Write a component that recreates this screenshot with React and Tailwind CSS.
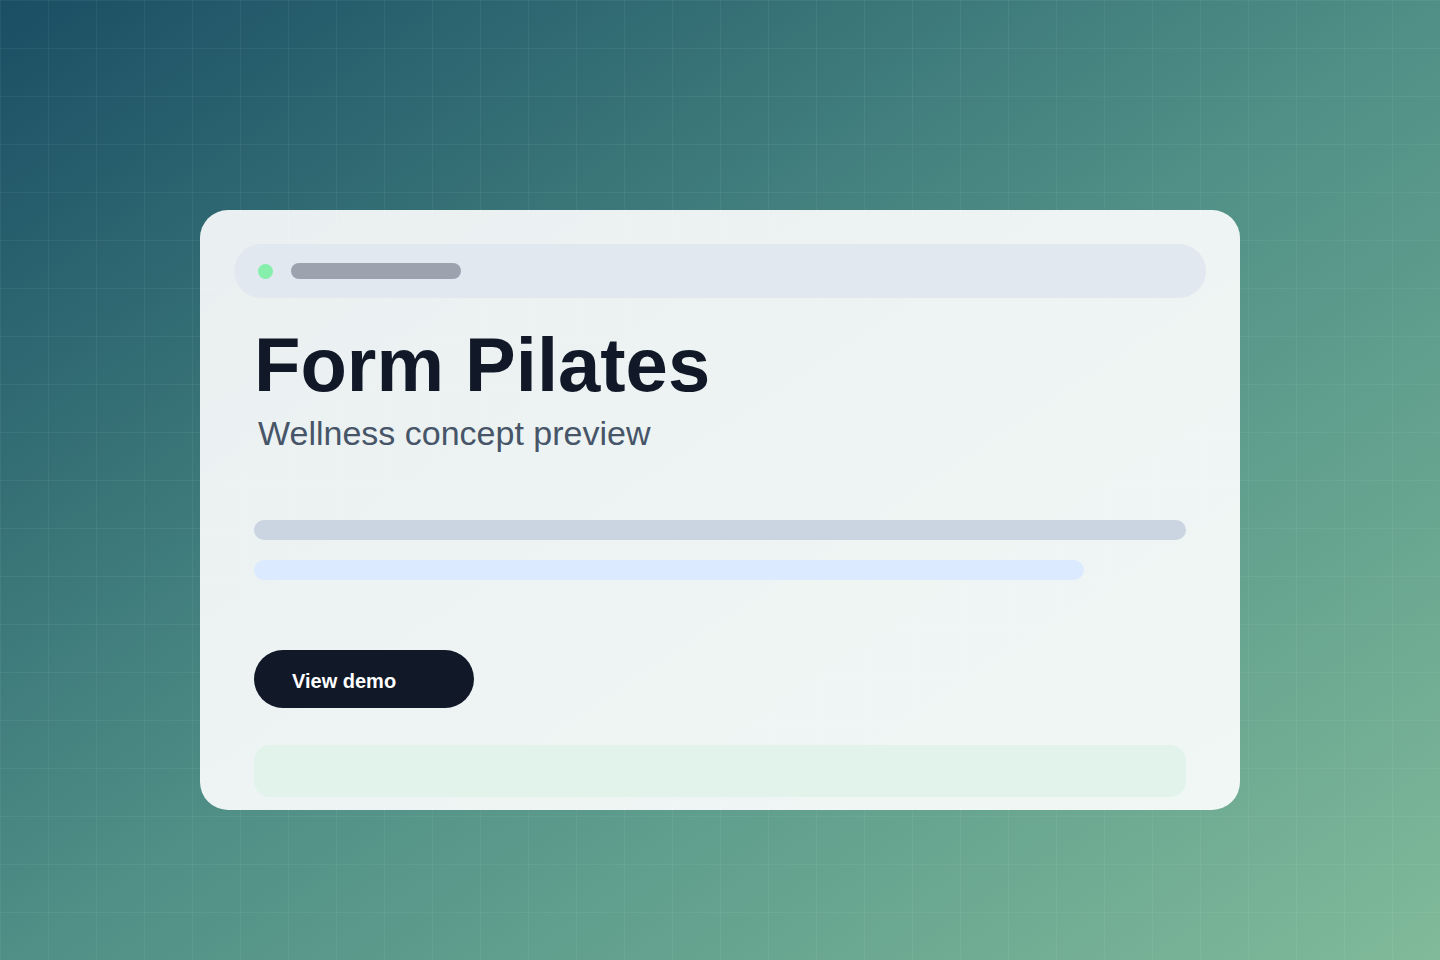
export default function App() {
  return (
    <div className="w-[1440px] h-[960px] bg-[linear-gradient(to_bottom_right,#1a4e64_0%,#4f8f86_50%,#80ba9a_100%)]">
      <div className="w-full h-full flex justify-center pt-[210px] bg-[linear-gradient(rgba(255,255,255,0.05)_1px,transparent_1px),linear-gradient(90deg,rgba(255,255,255,0.05)_1px,transparent_1px)] bg-[size:48px_48px]">
        <div className="w-[1040px] h-[600px] rounded-[28px] bg-white/90 p-[34px] overflow-hidden font-['Liberation_Sans',Arial,sans-serif]">
          <div className="h-[54px] rounded-full bg-[#e2e8f0] flex items-center pl-[24px] gap-[18px]">
            <div className="w-[15px] h-[15px] rounded-full bg-[#86efac]" />
            <div className="w-[170px] h-[16px] rounded-full bg-[#9ca3af]" />
          </div>
          <div className="px-[20px]">
            <h1 className="mt-[29px] text-[76px] leading-none font-bold text-[#111827]">Form Pilates</h1>
            <p className="mt-[13px] ml-[4px] text-[34px] leading-none text-[#475569]">Wellness concept preview</p>
            <div className="mt-[70px] h-[20px] rounded-full bg-[#cbd5e1]" />
            <div className="mt-[20px] h-[20px] w-[830px] rounded-full bg-[#dbeafe]" />
            <button className="mt-[70px] w-[220px] h-[58px] rounded-full bg-[#111827] text-white text-[20px] font-bold text-left pl-[38px] pt-[3px]">View demo</button>
            <div className="mt-[37px] h-[52px] rounded-[16px] bg-[#e2f3eb]" />
          </div>
        </div>
      </div>
    </div>
  );
}
